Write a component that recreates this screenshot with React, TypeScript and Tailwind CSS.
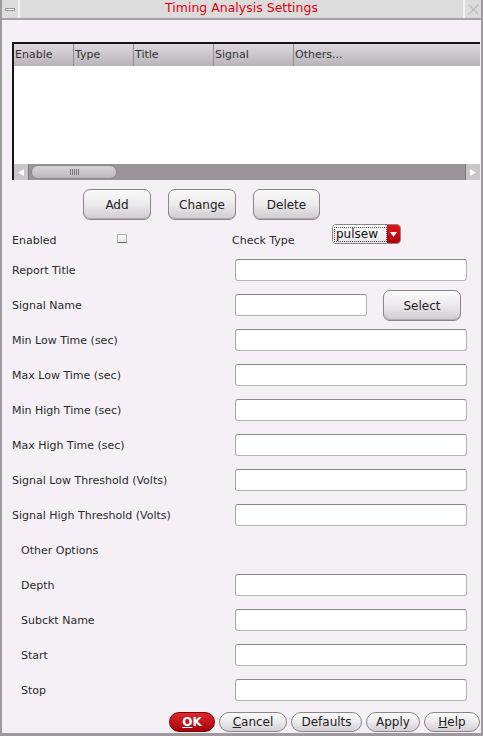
import React from 'react';

const font = { fontFamily: '"DejaVu Sans", Verdana, sans-serif' };

const Field = ({ w = 'w-[232px]' }: { w?: string }) => (
  <div
    className={`${w} h-[22px] -mt-[1px] bg-white rounded-[3px] border border-[#b8b4b8] border-t-[#8c888c] border-l-[#a8a4a8]`}
  />
);

const GelButton = ({ label, className }: { label: string; className: string }) => (
  <div
    className={`${className} flex items-center justify-center rounded-[7px] border border-[#8a868a] text-[12px] text-[#222] bg-gradient-to-b from-[#fbfbfb] via-[#ebe9eb] to-[#cfcccf] shadow-[inset_0_-1px_0_#b0acb0]`}
  >
    {label}
  </div>
);

const Row = ({
  label,
  indent = false,
  children,
}: {
  label: string;
  indent?: boolean;
  children?: React.ReactNode;
}) => (
  <div className="flex items-center h-[35px]">
    <div className={`${indent ? 'pl-[19px]' : 'pl-[10px]'} w-[233px] pt-[1px] text-[11px] text-[#2b2b2b] whitespace-nowrap`}>
      {label}
    </div>
    {children}
  </div>
);

const Pill = ({
  children,
  className,
  red = false,
}: {
  children: React.ReactNode;
  className: string;
  red?: boolean;
}) => (
  <div
    className={`${className} h-[20px] flex items-center justify-center rounded-full border text-[12px] ${
      red
        ? 'bg-gradient-to-b from-[#e0262a] to-[#a80008] border-[#7a0005] text-white font-bold'
        : 'bg-gradient-to-b from-[#fbfbfb] via-[#eceaec] to-[#d2cfd2] border-[#8a868a] text-[#222]'
    }`}
  >
    {children}
  </div>
);

const columns = [
  { name: 'Enable', w: 'w-[60px]' },
  { name: 'Type', w: 'w-[60px]' },
  { name: 'Title', w: 'w-[80px]' },
  { name: 'Signal', w: 'w-[80px]' },
  { name: 'Others...', w: 'flex-1' },
];

export default function App() {
  return (
    <div style={font} className="w-[483px] h-[736px] bg-[#f4f0f6] flex flex-col overflow-hidden border-x-2 border-b-[3px] border-[#9c9a9c]">
      {/* title bar */}
      <div className="h-[20px] flex bg-[#dcdcdc] border-b-2 border-[#a4a2a4]">
        <div className="w-[18px] flex items-center justify-center border-r-2 border-[#f2f2f2]">
          <div className="w-[10px] h-[3px] bg-white border border-[#9a9a9a]" />
        </div>
        <div className="flex-1 flex items-center justify-center text-[12.5px] text-[#e00010] pb-[1px]">
          Timing Analysis Settings
        </div>
        <div className="w-[18px] flex items-center justify-center border-l-2 border-[#f2f2f2]">
          <svg width="11" height="11" viewBox="0 0 11 11">
            <path d="M1 1L10 10M10 1L1 10" stroke="#b8b8b8" strokeWidth="2.2" strokeDasharray="1.4 1" />
          </svg>
        </div>
      </div>

      {/* table */}
      <div className="mt-[22px] ml-[10px] mr-[1px] h-[138px] flex flex-col border-t-2 border-l-2 border-[#161616]">
        <div className="h-[22px] flex bg-gradient-to-b from-[#dcd8dc] to-[#b8b4ba] text-[11px] text-[#333]">
          {columns.map((c, i) => (
            <div
              key={c.name}
              className={`${c.w} flex items-center pl-[1px] ${i < columns.length - 1 ? 'border-r border-[#8e8a8e]' : ''}`}
            >
              {c.name}
            </div>
          ))}
        </div>
        <div className="flex-1 bg-white" />
        <div className="h-[16px] flex items-center bg-[#999599]">
          <div className="w-[15px] h-[16px] flex items-center justify-center bg-[#c8c6c8] border-r border-[#777]">
            <svg width="6" height="7" viewBox="0 0 6 7">
              <path d="M0 3.5L6 0V7Z" fill="#fff" />
            </svg>
          </div>
          <div className="ml-[2px] w-[86px] h-[14px] rounded-full border border-[#8a868a] bg-gradient-to-b from-[#d6d4d6] to-[#bdbabd] flex items-center justify-center gap-[1px]">
            {[0, 1, 2, 3, 4].map((k) => (
              <div key={k} className="w-[1px] h-[6px] bg-[#777]" />
            ))}
          </div>
          <div className="flex-1" />
          <div className="w-[15px] h-[16px] flex items-center justify-center bg-[#c8c6c8] border-l border-[#777]">
            <svg width="6" height="7" viewBox="0 0 6 7">
              <path d="M6 3.5L0 0V7Z" fill="#fff" />
            </svg>
          </div>
        </div>
      </div>

      {/* add/change/delete */}
      <div className="mt-[9px] h-[31px] flex gap-[17px] pl-[81px]">
        <GelButton label="Add" className="w-[68px] h-[31px]" />
        <GelButton label="Change" className="w-[68px] h-[31px]" />
        <GelButton label="Delete" className="w-[67px] h-[31px]" />
      </div>

      {/* enabled / check type */}
      <div className="h-[33px] flex items-center pt-[4px]">
        <div className="pl-[10px] w-[115px] text-[11px] text-[#2b2b2b] pt-[6px]">Enabled</div>
        <div className="w-[10px] h-[9px] bg-gradient-to-b from-white to-[#e4e2e4] border border-[#b4b0b4] border-b-[#6a686a] mt-[-1px]" />
        <div className="ml-[105px] w-[100px] text-[11px] text-[#2b2b2b] pt-[5px]">Check Type</div>
        <div className="-mt-[9px] w-[69px] h-[20px] flex rounded-[4px] border border-[#8a868a] overflow-hidden">
          <div className="flex-1 bg-gradient-to-b from-white to-[#e6e4e6] flex items-center pl-[1px]">
            <div className="border border-dotted border-[#555] px-[1px] leading-[13px] text-[12px] text-[#111] w-[53px]">
              pulsew
            </div>
          </div>
          <div className="w-[15px] bg-gradient-to-b from-[#e4141c] to-[#b0000a] flex items-center justify-center">
            <svg width="7" height="5" viewBox="0 0 7 5">
              <path d="M0 0H7L3.5 5Z" fill="#fff" />
            </svg>
          </div>
        </div>
      </div>

      <Row label="Report Title">
        <Field />
      </Row>
      <Row label="Signal Name">
        <Field w="w-[132px]" />
        <GelButton label="Select" className="ml-[16px] w-[78px] h-[31px]" />
      </Row>
      <Row label="Min Low Time (sec)">
        <Field />
      </Row>
      <Row label="Max Low Time (sec)">
        <Field />
      </Row>
      <Row label="Min High Time (sec)">
        <Field />
      </Row>
      <Row label="Max High Time (sec)">
        <Field />
      </Row>
      <Row label="Signal Low Threshold (Volts)">
        <Field />
      </Row>
      <Row label="Signal High Threshold (Volts)">
        <Field />
      </Row>
      <Row label="Other Options" indent />
      <Row label="Depth" indent>
        <Field />
      </Row>
      <Row label="Subckt Name" indent>
        <Field />
      </Row>
      <Row label="Start" indent>
        <Field />
      </Row>
      <Row label="Stop" indent>
        <Field />
      </Row>

      {/* dialog buttons */}
      <div className="mt-[4px] flex justify-end gap-[4px] pr-[1px]">
        <Pill red className="w-[46px]">
          <span className="underline">O</span>K
        </Pill>
        <Pill className="w-[68px]">
          <span className="underline">C</span>ancel
        </Pill>
        <Pill className="w-[71px]">Defaults</Pill>
        <Pill className="w-[54px]">Apply</Pill>
        <Pill className="w-[56px]">
          <span className="underline">H</span>elp
        </Pill>
      </div>
    </div>
  );
}
